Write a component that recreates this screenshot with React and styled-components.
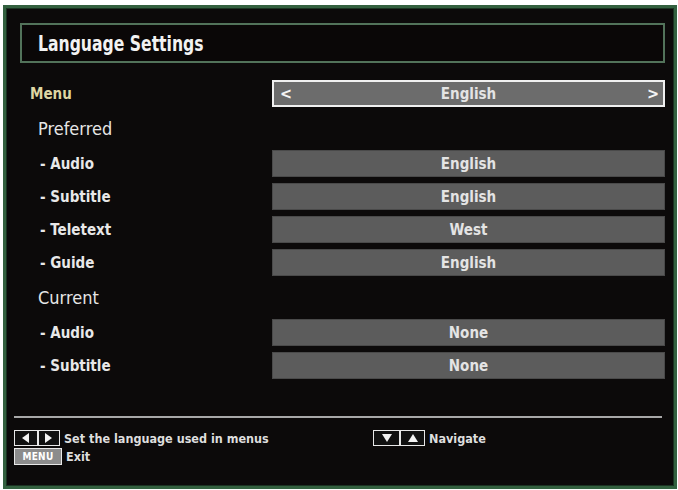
import React from "react";
import styled, { createGlobalStyle } from "styled-components";

const Global = createGlobalStyle`
  body {
    margin: 0;
    background: #ffffff;
    font-family: "DejaVu Sans Condensed", "DejaVu Sans", sans-serif;
  }
`;

// Outer TV frame
const Frame = styled.div`
  box-sizing: border-box;
  margin: 5px 0 0 3px;
  width: 674px;
  height: 484px;
  background: #0c0a0a;
  border: 3px solid #33603f;
  box-shadow: inset 0 0 0 1px #1b3322;
  padding: 15px 9px 0 8px;
  display: flex;
  flex-direction: column;
`;

const TitleBox = styled.div`
  margin-left: 6px;
  height: 40px;
  box-sizing: border-box;
  border: 2px solid #52735a;
  background: #0a0707;
  display: flex;
  align-items: center;
  padding-left: 16px;
`;

const TitleText = styled.span`
  display: inline-block;
  color: #f2f2f2;
  font-size: 22px;
  font-weight: bold;
  transform: scaleX(0.79);
  transform-origin: left center;
  white-space: nowrap;
`;

const List = styled.div`
  margin: 17px 0 0 6px;
  display: flex;
  flex-direction: column;
  gap: 6px;
`;

const Row = styled.div`
  display: grid;
  grid-template-columns: 252px 393px;
  height: 27px;
  align-items: center;
`;

const Label = styled.div`
  padding-left: ${(p) => (p.$main ? "10px" : "20px")};
  color: ${(p) => (p.$main ? "#ded6a2" : "#e8e8e8")};
  font-size: 15px;
  font-weight: bold;
`;

const Header = styled.div`
  height: 31px;
  display: flex;
  align-items: center;
  padding-left: 18px;
  color: #e6e6e6;
  font-size: 18px;
`;

const Value = styled.div`
  box-sizing: border-box;
  height: 27px;
  display: flex;
  align-items: center;
  justify-content: space-between;
  padding: 0 6px;
  background: ${(p) => (p.$active ? "#6c6c6c" : "#5c5c5c")};
  border: ${(p) => (p.$active ? "2px solid #f0f0f0" : "1px solid #4a4a4a")};
  color: #e4e4e4;
  font-size: 15px;
  font-weight: bold;
`;

const ValueText = styled.span`
  flex: 1;
  text-align: center;
`;

const Arrow = styled.span`
  font-size: 16px;
  color: #f4f4f4;
  width: 10px;
`;

const Divider = styled.div`
  margin-top: auto;
  margin-bottom: 12px;
  height: 2px;
  width: 648px;
  background: #a8a8a8;
`;

const Footer = styled.div`
  display: grid;
  grid-template-columns: 359px auto;
  row-gap: 2px;
  padding-bottom: 22px;
`;

const Hint = styled.div`
  display: flex;
  align-items: center;
  gap: 4px;
  color: #dedede;
  font-size: 12.5px;
  font-weight: bold;
  height: 16px;
`;

const KeyGroup = styled.div`
  display: flex;
  height: 16px;
  box-sizing: border-box;
  border: 1px solid #e8e8e8;
`;

const KeyCell = styled.div`
  width: ${(p) => p.$w || 22}px;
  height: 100%;
  box-sizing: border-box;
  background: #111;
  display: flex;
  align-items: center;
  justify-content: center;
  & + & {
    border-left: 2px solid #e8e8e8;
  }
`;

const MenuKey = styled.div`
  box-sizing: border-box;
  width: 48px;
  height: 17px;
  border: 1px solid #e8e8e8;
  background: #8c8c8c;
  color: #ffffff;
  font-size: 10px;
  font-weight: bold;
  display: flex;
  align-items: center;
  justify-content: center;
  letter-spacing: 0.3px;
`;

const Tri = ({ dir }) => {
  const pts = {
    left: "9,1 2,6 9,11",
    right: "2,1 9,6 2,11",
    up: "1,10 6,2 11,10",
    down: "1,2 6,10 11,2",
  }[dir];
  return (
    <svg width="12" height="12" viewBox="0 0 12 12">
      <polygon points={pts} fill="#f2f2f2" />
    </svg>
  );
};

const preferred = [
  ["- Audio", "English"],
  ["- Subtitle", "English"],
  ["- Teletext", "West"],
  ["- Guide", "English"],
];

const current = [
  ["- Audio", "None"],
  ["- Subtitle", "None"],
];

export default function App() {
  return (
    <>
      <Global />
      <Frame>
        <TitleBox>
          <TitleText>Language Settings</TitleText>
        </TitleBox>
        <List>
          <Row>
            <Label $main>Menu</Label>
            <Value $active>
              <Arrow>&lt;</Arrow>
              <ValueText>English</ValueText>
              <Arrow>&gt;</Arrow>
            </Value>
          </Row>
          <Header>Preferred</Header>
          {preferred.map(([l, v]) => (
            <Row key={"p" + l}>
              <Label>{l}</Label>
              <Value>
                <ValueText>{v}</ValueText>
              </Value>
            </Row>
          ))}
          <Header>Current</Header>
          {current.map(([l, v]) => (
            <Row key={"c" + l}>
              <Label>{l}</Label>
              <Value>
                <ValueText>{v}</ValueText>
              </Value>
            </Row>
          ))}
        </List>
        <Divider />
        <Footer>
          <Hint>
            <KeyGroup>
              <KeyCell>
                <Tri dir="left" />
              </KeyCell>
              <KeyCell>
                <Tri dir="right" />
              </KeyCell>
            </KeyGroup>
            Set the language used in menus
          </Hint>
          <Hint>
            <KeyGroup>
              <KeyCell $w={25}>
                <Tri dir="down" />
              </KeyCell>
              <KeyCell $w={25}>
                <Tri dir="up" />
              </KeyCell>
            </KeyGroup>
            Navigate
          </Hint>
          <Hint>
            <MenuKey>MENU</MenuKey>
            Exit
          </Hint>
        </Footer>
      </Frame>
    </>
  );
}
